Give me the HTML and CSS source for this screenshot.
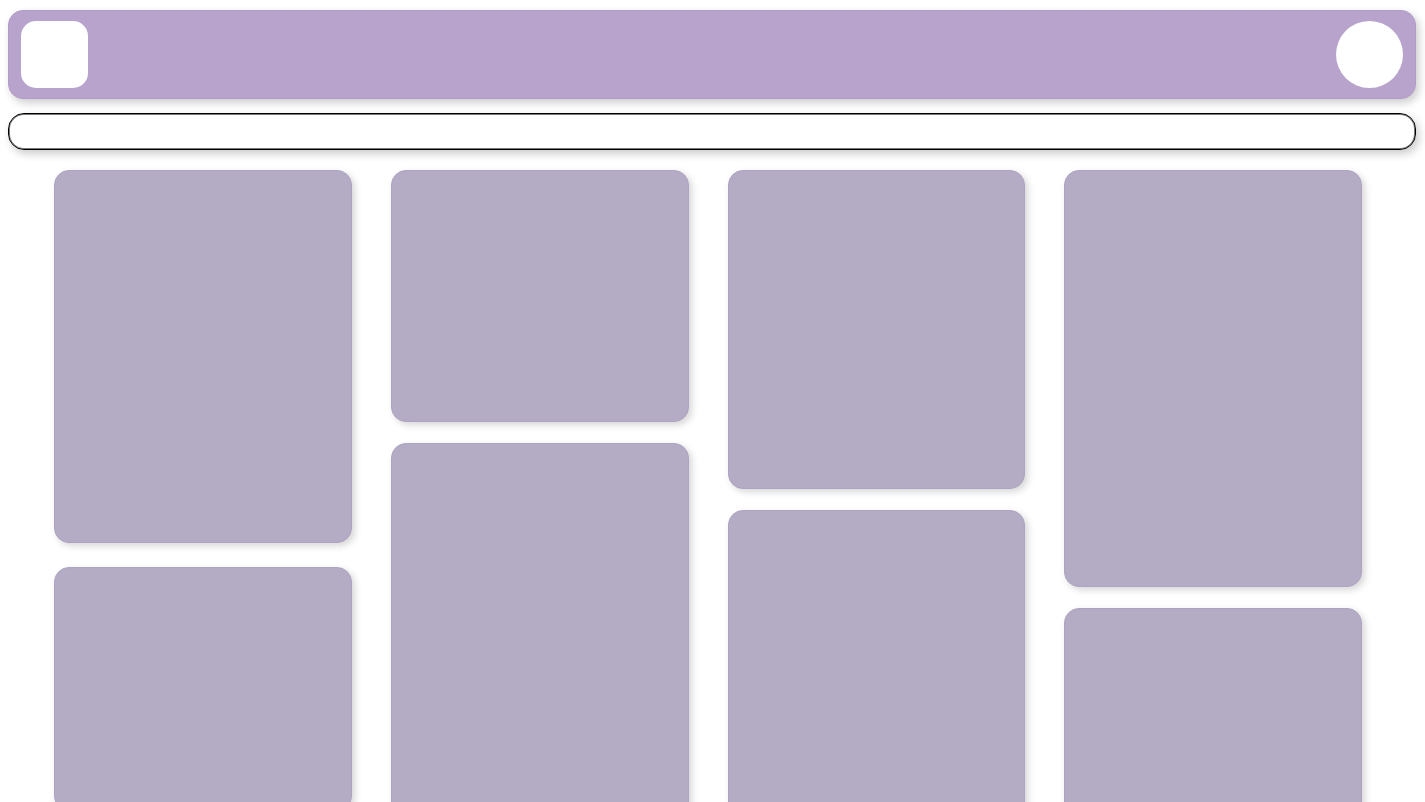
FILE: index.html
```html
<!DOCTYPE html>
<html lang="en">
<head>
<meta charset="utf-8">
<meta name="viewport" content="width=device-width, initial-scale=1">
<title>Board</title>
<link rel="stylesheet" href="styles.css">
</head>
<body>
<header class="header">
  <div class="logo"></div>
  <div class="avatar"></div>
</header>
<nav class="toolbar"></nav>
<main class="board">
  <section class="column column-wide-gap">
    <article class="card card-large"></article>
    <article class="card card-short"></article>
  </section>
  <section class="column">
    <article class="card card-small"></article>
    <article class="card card-tall"></article>
  </section>
  <section class="column">
    <article class="card card-medium"></article>
    <article class="card card-large"></article>
  </section>
  <section class="column">
    <article class="card card-tall"></article>
    <article class="card card-medium"></article>
  </section>
</main>
</body>
</html>
```

FILE: styles.css
```css
* {
  box-sizing: border-box;
}

body {
  display: flex;
  flex-direction: column;
  height: 100vh;
  margin: 0;
  padding: 10px 9px 0 8px;
  overflow: hidden;
  background: #fff;
  font-family: "Liberation Sans", Arial, sans-serif;
}

.header {
  display: flex;
  flex: none;
  align-items: center;
  justify-content: space-between;
  padding: 10px 12px;
  border: 1px solid #b39bc9;
  border-radius: 15px;
  background: #b8a3cc;
  box-shadow: 3px 4px 8px rgba(0, 0, 0, 0.2);
}

.logo,
.avatar {
  width: 67px;
  height: 67px;
  background: #fff;
}

.logo {
  border-radius: 15px;
}

.avatar {
  border-radius: 50%;
}

.toolbar {
  flex: none;
  height: 37px;
  margin-top: 14px;
  border: 1px solid #000;
  border-radius: 16px;
  background: #fff;
  box-shadow: inset 0 0 0 1px #777, 3px 4px 8px rgba(0, 0, 0, 0.2);
}

.board {
  display: grid;
  flex: none;
  grid-template-columns: repeat(4, 1fr);
  gap: 39px;
  align-items: start;
  padding: 20px 54px 20px 46px;
}

.column {
  display: flex;
  flex-direction: column;
  gap: 21px;
}

.column-wide-gap {
  gap: 24px;
}

.card {
  border: 1px solid #aea3c2;
  border-radius: 15px;
  background: #b4abc4;
  box-shadow: 3px 3px 7px rgba(0, 0, 0, 0.16);
}

.card-short {
  height: 244px;
}

.card-small {
  height: 252px;
}

.card-medium {
  height: 319px;
}

.card-large {
  height: 373px;
}

.card-tall {
  height: 417px;
}
```
